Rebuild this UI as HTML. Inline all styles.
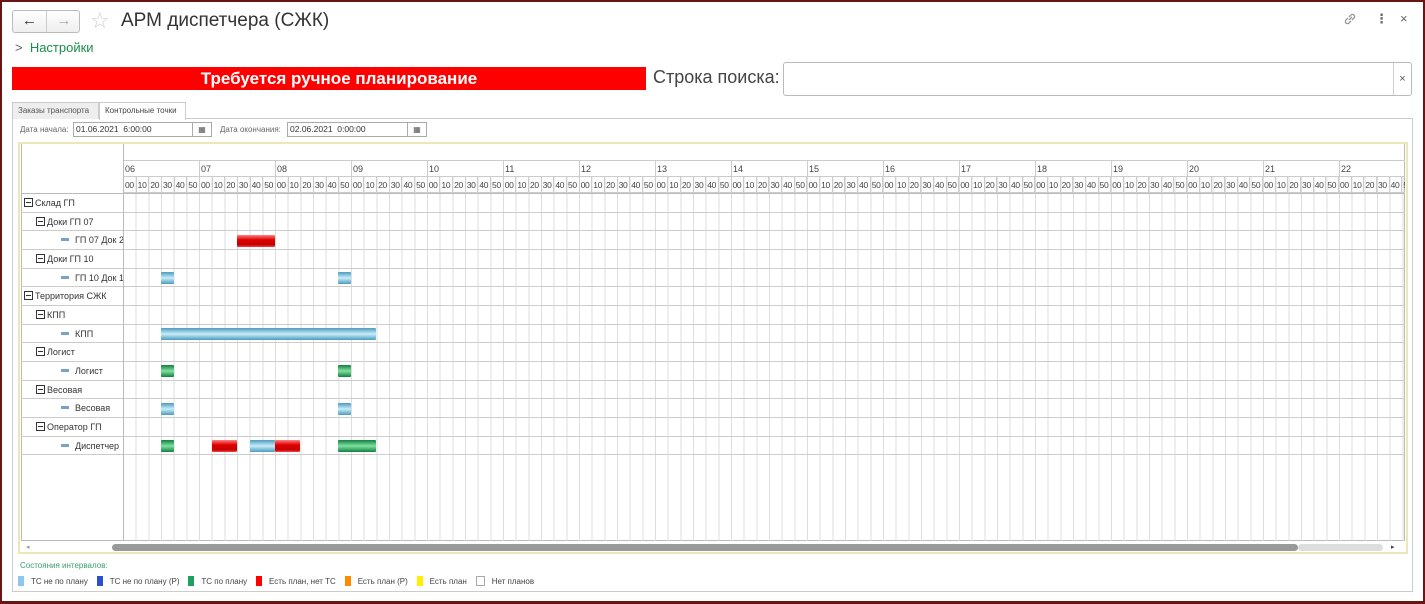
<!DOCTYPE html>
<html><head><meta charset="utf-8">
<style>
*{box-sizing:border-box;margin:0;padding:0}
body{width:1425px;height:604px;background:#fff;font-family:"Liberation Sans","DejaVu Sans",sans-serif;position:relative;overflow:hidden;color:#333}
.abs{position:absolute}
#frame{left:0;top:0;width:1425px;height:604px;border:2px solid #6b1414;border-bottom-width:3px}
.nav{left:12px;top:10px;width:68px;height:23px;border:1px solid #bbb;border-radius:3px;background:linear-gradient(#fff,#eee)}
.nav div{position:absolute;top:0;width:34px;height:21px;text-align:center;font-size:15px;line-height:20px}
.title{left:121px;top:10px;font-size:19px;color:#333}
.set{left:15px;top:40px;font-size:13px;color:#1a8f4a}
.redbar{left:12px;top:67px;width:634px;height:23px;background:#f00;color:#fff;font-weight:bold;font-size:17px;text-align:center;line-height:23px;padding-left:20px}
.slab{left:653px;top:67px;font-size:18px;color:#444}
.sinp{left:783px;top:62px;width:629px;height:34px;border:1px solid #bbb;border-radius:3px}
.sinp span{position:absolute;right:0;top:0;width:18px;height:32px;border-left:1px solid #ccc;text-align:center;line-height:32px;font-size:11px;color:#555}
.tab{top:102px;height:17px;font-size:8px;line-height:16px;padding:0 5px;border:1px solid #ccc;border-bottom:none;white-space:nowrap}
.panel{left:12px;top:118px;width:1401px;height:474px;border:1px solid #ccc}
.lbl{font-size:8px;color:#666;top:125px;white-space:nowrap}
.inp{top:122px;height:15px;border:1px solid #aaa;font-size:8.5px;line-height:13px;padding-left:2px;color:#333}
.cal{top:122px;width:19px;height:15px;border:1px solid #aaa;border-left:none;font-size:8px;text-align:center;line-height:13px;color:#555}
.chart{left:18px;top:142px;width:1390px;height:412px;border:2px solid #ece6b8;background:#fff}
.grid{left:21px;top:144px;width:1384px;height:397px;border:1px solid #bbb;border-top:none}
.vlines{left:123px;top:177px;width:1282px;height:364px;background:repeating-linear-gradient(90deg,#ddd 0 1px,transparent 1px 12.667px)}
.hrow{left:123px;height:16px;width:1282px;font-size:9px;color:#444;display:flex;border-bottom:1px solid #ccc}
.hh span{flex:0 0 76px;border-left:1px solid #ccc;padding-left:1px;line-height:16px}
.mm span{flex:0 0 12.667px;border-left:1px solid #ccc;padding-left:1px;line-height:16px;font-size:8.5px;overflow:hidden;letter-spacing:-.3px}
.row{left:21px;width:1384px;height:18.67px;border-bottom:1px solid #ccc;font-size:9px;color:#333;line-height:18px}
.row i{font-style:normal;display:inline-block;width:9px;height:9px;border:1px solid #333;vertical-align:-1px;margin-right:2px;position:relative}
.row i:after{content:"";position:absolute;left:1px;top:3px;width:5px;height:1px;background:#333}
.row b{font-weight:normal;display:inline-block;width:8px;height:3px;background:#7aa2c8;vertical-align:2px;margin-right:6px}
.lcol{left:123px;top:144px;width:1px;height:397px;background:#bbb}
.bar{height:12px;border-radius:1px}
.r{background:linear-gradient(#ff8080,#e00000 40%,#c00000 80%,#ff4040)}
.b{background:linear-gradient(#4a9cc0,#c8ecf8 50%,#4a9cc0)}
.g{background:linear-gradient(#108040,#80e0a0 50%,#108040)}
.sb{left:112px;top:544px;width:1186px;height:7px;border-radius:4px;background:#999}
.sb2{left:1298px;top:544px;width:85px;height:7px;border-radius:4px;background:#ddd}
.leg{top:576px;font-size:8px;color:#444;display:flex;align-items:center;white-space:nowrap}
.leg s{display:inline-block;width:6px;height:10px;margin-right:7px}
</style></head><body>
<div id="frame" class="abs"></div>
<div class="abs nav"><div style="left:0;border-right:1px solid #ccc">&#8592;</div><div style="left:34px;color:#aaa">&#8594;</div></div>
<div class="abs" style="left:90px;top:8px;font-size:22px;color:#ccc">&#9734;</div>
<div class="abs title">АРМ диспетчера (СЖК)</div>
<svg class="abs" style="left:1342px;top:11px" width="16" height="16" viewBox="0 0 16 16" fill="none" stroke="#999" stroke-width="1.3"><path d="M7 9l3-3M6 7l-2 2a2 2 0 003 3l2-2M10 9l2-2a2 2 0 00-3-3L7 6"/></svg>
<div class="abs" style="left:1375px;top:11px;font-size:13px;color:#666;font-weight:bold">&#8942;</div>
<div class="abs" style="left:1400px;top:11px;font-size:13px;color:#666">&#215;</div>
<div class="abs set"><span style="color:#666">&gt;</span>&nbsp; Настройки</div>
<div class="abs redbar">Требуется ручное планирование</div>
<div class="abs slab">Строка поиска:</div>
<div class="abs sinp"><span>&#215;</span></div>
<div class="abs panel"></div>
<div class="abs tab" style="left:12px;width:87px;background:#eee;color:#555">Заказы транспорта</div>
<div class="abs tab" style="left:99px;width:87px;background:#fff;color:#444;height:18px">Контрольные точки</div>
<div class="abs lbl" style="left:20px">Дата начала:</div>
<div class="abs inp" style="left:73px;width:120px">01.06.2021 &nbsp;6:00:00</div>
<div class="abs cal" style="left:193px">&#9638;</div>
<div class="abs lbl" style="left:220px">Дата окончания:</div>
<div class="abs inp" style="left:287px;width:121px">02.06.2021 &nbsp;0:00:00</div>
<div class="abs cal" style="left:408px">&#9638;</div>

<div class="abs chart"></div>
<div class="abs grid"></div>
<div class="abs vlines"></div>
<div class="abs lcol"></div>
<div class="abs" style="left:123px;top:160px;width:1282px;height:1px;background:#ccc"></div>
<div class="abs hrow hh" style="top:161px"><span>06</span><span>07</span><span>08</span><span>09</span><span>10</span><span>11</span><span>12</span><span>13</span><span>14</span><span>15</span><span>16</span><span>17</span><span>18</span><span>19</span><span>20</span><span>21</span><span>22</span></div>
<div class="abs hrow mm" style="top:177px;overflow:hidden"><span>00</span><span>10</span><span>20</span><span>30</span><span>40</span><span>50</span><span>00</span><span>10</span><span>20</span><span>30</span><span>40</span><span>50</span><span>00</span><span>10</span><span>20</span><span>30</span><span>40</span><span>50</span><span>00</span><span>10</span><span>20</span><span>30</span><span>40</span><span>50</span><span>00</span><span>10</span><span>20</span><span>30</span><span>40</span><span>50</span><span>00</span><span>10</span><span>20</span><span>30</span><span>40</span><span>50</span><span>00</span><span>10</span><span>20</span><span>30</span><span>40</span><span>50</span><span>00</span><span>10</span><span>20</span><span>30</span><span>40</span><span>50</span><span>00</span><span>10</span><span>20</span><span>30</span><span>40</span><span>50</span><span>00</span><span>10</span><span>20</span><span>30</span><span>40</span><span>50</span><span>00</span><span>10</span><span>20</span><span>30</span><span>40</span><span>50</span><span>00</span><span>10</span><span>20</span><span>30</span><span>40</span><span>50</span><span>00</span><span>10</span><span>20</span><span>30</span><span>40</span><span>50</span><span>00</span><span>10</span><span>20</span><span>30</span><span>40</span><span>50</span><span>00</span><span>10</span><span>20</span><span>30</span><span>40</span><span>50</span><span>00</span><span>10</span><span>20</span><span>30</span><span>40</span><span>50</span><span>00</span><span>10</span><span>20</span><span>30</span><span>40</span><span>50</span></div>
<div class="abs" style="left:21px;top:193px;width:1384px;height:1px;background:#bbb"></div>

<div class="abs row" style="top:194px;padding-left:3px"><i></i>Склад ГП</div>
<div class="abs row" style="top:212.7px;padding-left:15px"><i></i>Доки ГП 07</div>
<div class="abs row" style="top:231.3px;padding-left:40px"><b></b>ГП 07 Док 2</div>
<div class="abs row" style="top:250px;padding-left:15px"><i></i>Доки ГП 10</div>
<div class="abs row" style="top:268.7px;padding-left:40px"><b></b>ГП 10 Док 1</div>
<div class="abs row" style="top:287.3px;padding-left:3px"><i></i>Территория СЖК</div>
<div class="abs row" style="top:306px;padding-left:15px"><i></i>КПП</div>
<div class="abs row" style="top:324.7px;padding-left:40px"><b></b>КПП</div>
<div class="abs row" style="top:343.3px;padding-left:15px"><i></i>Логист</div>
<div class="abs row" style="top:362px;padding-left:40px"><b></b>Логист</div>
<div class="abs row" style="top:380.7px;padding-left:15px"><i></i>Весовая</div>
<div class="abs row" style="top:399.3px;padding-left:40px"><b></b>Весовая</div>
<div class="abs row" style="top:418px;padding-left:15px"><i></i>Оператор ГП</div>
<div class="abs row" style="top:436.7px;padding-left:40px"><b></b>Диспетчер</div>
<div class="abs lcol"></div>

<div class="abs bar r" style="left:237px;top:235px;width:38px"></div>
<div class="abs bar b" style="left:161px;top:272px;width:13px"></div>
<div class="abs bar b" style="left:338px;top:272px;width:13px"></div>
<div class="abs bar b" style="left:161px;top:328px;width:215px"></div>
<div class="abs bar g" style="left:161px;top:365px;width:13px"></div>
<div class="abs bar g" style="left:338px;top:365px;width:13px"></div>
<div class="abs bar b" style="left:161px;top:403px;width:13px"></div>
<div class="abs bar b" style="left:338px;top:403px;width:13px"></div>
<div class="abs bar g" style="left:161px;top:440px;width:13px"></div>
<div class="abs bar r" style="left:212px;top:440px;width:25px"></div>
<div class="abs bar b" style="left:250px;top:440px;width:25px"></div>
<div class="abs bar r" style="left:275px;top:440px;width:25px"></div>
<div class="abs bar g" style="left:338px;top:440px;width:38px"></div>

<div class="abs" style="left:26px;top:543px;font-size:7px;color:#999">&#9666;</div>
<div class="abs sb"></div><div class="abs sb2"></div>
<div class="abs" style="left:1391px;top:543px;font-size:7px;color:#444">&#9656;</div>

<div class="abs" style="left:20px;top:561px;font-size:8px;color:#3aa070">Состояния интервалов:</div>
<div class="abs leg" style="left:18px"><s style="background:#8cc8ee"></s>ТС не по плану&nbsp;&nbsp;&nbsp;&nbsp;<s style="background:#2a50d0"></s>ТС не по плану (Р)&nbsp;&nbsp;&nbsp;&nbsp;<s style="background:#20a060"></s>ТС по плану&nbsp;&nbsp;&nbsp;&nbsp;<s style="background:#f00"></s>Есть план, нет ТС&nbsp;&nbsp;&nbsp;&nbsp;<s style="background:#ff8a00"></s>Есть план (Р)&nbsp;&nbsp;&nbsp;&nbsp;<s style="background:#ffee00"></s>Есть план&nbsp;&nbsp;&nbsp;&nbsp;<s style="border:1px solid #aaa;width:9px"></s>Нет планов</div>
</body></html>
